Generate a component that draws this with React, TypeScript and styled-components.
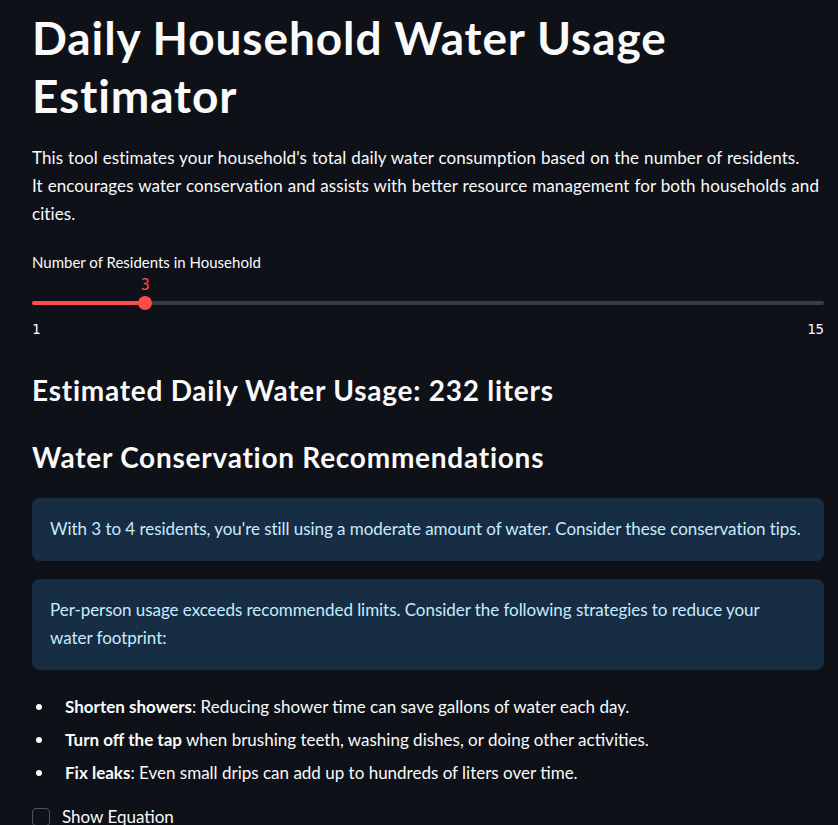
import React from "react";
import styled, { createGlobalStyle } from "styled-components";

const GlobalStyle = createGlobalStyle`
  html, body {
    margin: 0;
    padding: 0;
    background: #0e1117;
  }
  body {
    font-family: Lato, "Liberation Sans", sans-serif;
    color: #fafafa;
    -webkit-font-smoothing: antialiased;
  }
  * { box-sizing: border-box; }
`;

const Main = styled.main`
  display: flex;
  flex-direction: column;
  padding: 9px 14px 0 32px;
  width: 838px;
  min-height: 825px;
  background: #0e1117;
`;

const Title = styled.h1`
  margin: 0;
  font-size: 46px;
  font-weight: 700;
  line-height: 58px;
  letter-spacing: 0.9px;
  color: #fafafa;
`;

const Paragraph = styled.p`
  margin: 19px 0 0;
  font-size: 17px;
  line-height: 28px;
  letter-spacing: 0.08px;
  word-spacing: 0.5px;
`;

const SliderBlock = styled.div`
  display: flex;
  flex-direction: column;
  margin-top: 24px;
`;

const SliderLabel = styled.label`
  font-size: 15px;
  line-height: 21px;
  height: 21px;
`;

const ValueRow = styled.div`
  position: relative;
  height: 20px;
  margin-top: 2px;
`;

const ThumbValue = styled.span`
  position: absolute;
  top: 0;
  transform: translateX(-50%);
  font-family: "DejaVu Sans Mono", "Liberation Mono", monospace;
  font-size: 15px;
  line-height: 20px;
  color: #ff4b4b;
`;

const Track = styled.div`
  position: relative;
  height: 14px;
  margin-top: 1px;
  display: flex;
  align-items: center;
`;

const Rail = styled.div`
  width: 100%;
  height: 4px;
  border-radius: 2px;
  background: #3a3c44;
  display: flex;
`;

const RailFill = styled.div`
  height: 4px;
  border-radius: 2px;
  background: #ff4b4b;
`;

const Thumb = styled.div`
  position: absolute;
  top: 0;
  width: 14px;
  height: 14px;
  margin-left: -7px;
  border-radius: 50%;
  background: #ff4b4b;
`;

const TickRow = styled.div`
  display: flex;
  justify-content: space-between;
  margin-top: 9px;
  font-family: "DejaVu Sans Mono", "Liberation Mono", monospace;
  font-size: 14px;
  line-height: 20px;
  color: #fafafa;
`;

const Heading = styled.h3<{ $gap: number }>`
  margin: ${(p) => p.$gap}px 0 0;
  font-size: 28px;
  font-weight: 700;
  line-height: 36px;
  letter-spacing: 0.75px;
`;

const InfoBox = styled.div<{ $gap: number }>`
  margin-top: ${(p) => p.$gap}px;
  padding: 17px 18px 18px;
  border-radius: 8px;
  background: #172d43;
  color: #c7ebff;
  font-size: 17px;
  line-height: 28px;
  letter-spacing: -0.05px;
`;

const List = styled.ul`
  list-style: none;
  margin: 23px 0 0;
  padding: 0;
  display: flex;
  flex-direction: column;
  gap: 5px;
`;

const Item = styled.li`
  display: flex;
  align-items: center;
  font-size: 17px;
  line-height: 28px;
`;

const Bullet = styled.span`
  flex: none;
  width: 6px;
  height: 6px;
  margin: 0 23px 0 4px;
  border-radius: 50%;
  background: #fafafa;
`;

const CheckRow = styled.label`
  display: flex;
  align-items: center;
  gap: 12px;
  margin-top: 16px;
  font-size: 17px;
  line-height: 28px;
`;

const CheckBox = styled.span`
  flex: none;
  width: 18px;
  height: 18px;
  border-radius: 4px;
  border: 1px solid #50535c;
  background: #0e1117;
`;

export default function App() {
  const value = 3;
  const min = 1;
  const max = 15;
  const pct = ((value - min) / (max - min)) * 100;
  return (
    <>
      <GlobalStyle />
      <Main>
        <Title>Daily Household Water Usage Estimator</Title>
        <Paragraph>
          This tool estimates your household's total daily water consumption based on the number of residents.
          <br />
          It encourages water conservation and assists with better resource management for both households and
          cities.
        </Paragraph>
        <SliderBlock>
          <SliderLabel>Number of Residents in Household</SliderLabel>
          <ValueRow>
            <ThumbValue style={{ left: `${pct}%` }}>{value}</ThumbValue>
          </ValueRow>
          <Track>
            <Rail>
              <RailFill style={{ width: `${pct}%` }} />
            </Rail>
            <Thumb style={{ left: `${pct}%` }} />
          </Track>
          <TickRow>
            <span>{min}</span>
            <span>{max}</span>
          </TickRow>
        </SliderBlock>
        <Heading $gap={33}>Estimated Daily Water Usage: 232 liters</Heading>
        <Heading $gap={31}>Water Conservation Recommendations</Heading>
        <InfoBox $gap={23}>
          With 3 to 4 residents, you're still using a moderate amount of water. Consider these conservation tips.
        </InfoBox>
        <InfoBox $gap={18}>
          Per-person usage exceeds recommended limits. Consider the following strategies to reduce your
          <br />
          water footprint:
        </InfoBox>
        <List>
          <Item>
            <Bullet />
            <span>
              <b>Shorten showers</b>: Reducing shower time can save gallons of water each day.
            </span>
          </Item>
          <Item>
            <Bullet />
            <span>
              <b>Turn off the tap</b> when brushing teeth, washing dishes, or doing other activities.
            </span>
          </Item>
          <Item>
            <Bullet />
            <span>
              <b>Fix leaks</b>: Even small drips can add up to hundreds of liters over time.
            </span>
          </Item>
        </List>
        <CheckRow>
          <CheckBox />
          <span>Show Equation</span>
        </CheckRow>
      </Main>
    </>
  );
}
